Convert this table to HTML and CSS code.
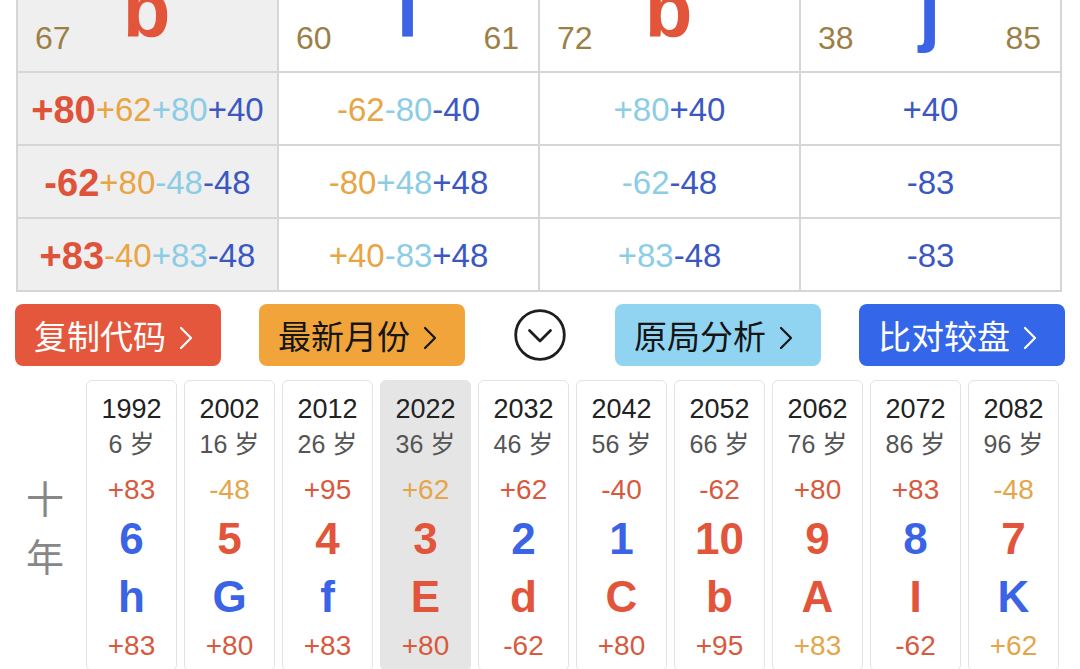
FILE: index.html
```html
<!DOCTYPE html>
<html lang="zh">
<head>
<meta charset="utf-8">
<title>十年</title>
<link rel="stylesheet" href="styles.css">
</head>
<body>
<div class="page">
  <div class="table">
    <div class="cell head shade">
      <span class="hn hl">67</span><span class="big red">b</span><span class="hn hr"></span>
    </div>
    <div class="cell head">
      <span class="hn hl">60</span><span class="big blue">l</span><span class="hn hr">61</span>
    </div>
    <div class="cell head">
      <span class="hn hl">72</span><span class="big red">b</span><span class="hn hr"></span>
    </div>
    <div class="cell head">
      <span class="hn hl">38</span><span class="big blue">j</span><span class="hn hr">85</span>
    </div>

    <div class="cell row shade"><b class="lead">+80</b><span class="o">+62</span><span class="lb">+80</span><span class="db">+40</span></div>
    <div class="cell row"><span class="o">-62</span><span class="lb">-80</span><span class="db">-40</span></div>
    <div class="cell row"><span class="lb">+80</span><span class="db">+40</span></div>
    <div class="cell row"><span class="db">+40</span></div>

    <div class="cell row shade"><b class="lead">-62</b><span class="o">+80</span><span class="lb">-48</span><span class="db">-48</span></div>
    <div class="cell row"><span class="o">-80</span><span class="lb">+48</span><span class="db">+48</span></div>
    <div class="cell row"><span class="lb">-62</span><span class="db">-48</span></div>
    <div class="cell row"><span class="db">-83</span></div>

    <div class="cell row shade"><b class="lead">+83</b><span class="o">-40</span><span class="lb">+83</span><span class="db">-48</span></div>
    <div class="cell row"><span class="o">+40</span><span class="lb">-83</span><span class="db">+48</span></div>
    <div class="cell row"><span class="lb">+83</span><span class="db">-48</span></div>
    <div class="cell row"><span class="db">-83</span></div>
  </div>

  <div class="actions">
    <div class="btn btn-red">复制代码<svg class="chev" viewBox="0 0 16 24" width="16" height="24"><polyline points="3,2 13,12 3,22" fill="none" stroke="currentColor" stroke-width="2.2" stroke-linecap="round" stroke-linejoin="round"/></svg></div>
    <div class="btn btn-orange">最新月份<svg class="chev" viewBox="0 0 16 24" width="16" height="24"><polyline points="3,2 13,12 3,22" fill="none" stroke="currentColor" stroke-width="2.2" stroke-linecap="round" stroke-linejoin="round"/></svg></div>
    <div class="toggle"><svg viewBox="0 0 52 52" width="52" height="52"><circle cx="26" cy="26" r="24.3" fill="none" stroke="#1e1e1e" stroke-width="2.8"/><polyline points="15.5,21.5 26,32 36.5,21.5" fill="none" stroke="#1e1e1e" stroke-width="2.8" stroke-linecap="round" stroke-linejoin="round"/></svg></div>
    <div class="btn btn-sky">原局分析<svg class="chev" viewBox="0 0 16 24" width="16" height="24"><polyline points="3,2 13,12 3,22" fill="none" stroke="currentColor" stroke-width="2.2" stroke-linecap="round" stroke-linejoin="round"/></svg></div>
    <div class="btn btn-blue">比对较盘<svg class="chev" viewBox="0 0 16 24" width="16" height="24"><polyline points="3,2 13,12 3,22" fill="none" stroke="currentColor" stroke-width="2.2" stroke-linecap="round" stroke-linejoin="round"/></svg></div>
  </div>

  <div class="decade">
    <div class="label"><span>十</span><span>年</span></div>
    <div class="cards">
      <div class="card"><div class="yr">1992</div><div class="age">6 岁</div><div class="n r">+83</div><div class="g blue">6</div><div class="g blue">h</div><div class="n r">+83</div></div>
      <div class="card"><div class="yr">2002</div><div class="age">16 岁</div><div class="n o2">-48</div><div class="g red">5</div><div class="g blue">G</div><div class="n r">+80</div></div>
      <div class="card"><div class="yr">2012</div><div class="age">26 岁</div><div class="n r">+95</div><div class="g red">4</div><div class="g blue">f</div><div class="n r">+83</div></div>
      <div class="card current"><div class="yr">2022</div><div class="age">36 岁</div><div class="n o2">+62</div><div class="g red">3</div><div class="g red">E</div><div class="n r">+80</div></div>
      <div class="card"><div class="yr">2032</div><div class="age">46 岁</div><div class="n r">+62</div><div class="g blue">2</div><div class="g red">d</div><div class="n r">-62</div></div>
      <div class="card"><div class="yr">2042</div><div class="age">56 岁</div><div class="n r">-40</div><div class="g blue">1</div><div class="g red">C</div><div class="n r">+80</div></div>
      <div class="card"><div class="yr">2052</div><div class="age">66 岁</div><div class="n r">-62</div><div class="g red">10</div><div class="g red">b</div><div class="n r">+95</div></div>
      <div class="card"><div class="yr">2062</div><div class="age">76 岁</div><div class="n r">+80</div><div class="g red">9</div><div class="g red">A</div><div class="n o2">+83</div></div>
      <div class="card"><div class="yr">2072</div><div class="age">86 岁</div><div class="n r">+83</div><div class="g blue">8</div><div class="g red">I</div><div class="n r">-62</div></div>
      <div class="card"><div class="yr">2082</div><div class="age">96 岁</div><div class="n o2">-48</div><div class="g red">7</div><div class="g blue">K</div><div class="n o2">+62</div></div>
    </div>
  </div>
</div>
</body>
</html>
```

FILE: styles.css
```css
html, body {
  margin: 0;
  padding: 0;
  overflow: hidden;
  background: #ffffff;
}

body {
  font-family: "Liberation Sans", "Noto Sans CJK SC", sans-serif;
  color: #222;
}

.page {
  width: 1080px;
}

/* ---------- top table ---------- */
.table {
  margin: -40px 0 0 16px;
  width: 1046px;
  box-sizing: border-box;
  display: grid;
  grid-template-columns: repeat(4, 1fr);
  grid-template-rows: 109px 71px 71px 71px;
  gap: 2px;
  padding: 2px;
  background: #d6d6d6;
}

.cell {
  background: #ffffff;
}

.cell.shade {
  background: #efefef;
}

.head {
  display: grid;
  grid-template-columns: 1fr auto 1fr;
  align-items: end;
  padding: 0 19px 0 17px;
}

.hn {
  font-size: 32px;
  line-height: 32px;
  color: #9c7f47;
  margin-bottom: 17px;
}

.hl { justify-self: start; }
.hr { justify-self: end; }

.big {
  font-size: 78px;
  line-height: 78px;
  font-weight: 700;
  margin-bottom: 22px;
}

.red { color: #e2553a; }
.blue { color: #3a63e6; }

.row {
  display: flex;
  align-items: center;
  justify-content: center;
  font-size: 33px;
  line-height: 40px;
  white-space: nowrap;
  padding-top: 2px;
}

.lead {
  font-size: 38px;
  font-weight: 700;
  color: #de533a;
}

.o { color: #e9a443; }
.lb { color: #8ccde6; }
.db { color: #3b58c2; }

/* ---------- action buttons ---------- */
.actions {
  display: flex;
  align-items: center;
  gap: 38px;
  margin: 12px 0 0 15px;
}

.btn {
  width: 206px;
  height: 62px;
  box-sizing: border-box;
  border-radius: 8px;
  display: flex;
  align-items: center;
  justify-content: center;
  font-family: "Noto Sans CJK SC", sans-serif;
  font-size: 33px;
  line-height: 40px;
  padding-right: 8px;
}

.chev {
  margin-left: 12px;
  margin-top: 6px;
}

.btn-red { background: #e5573c; color: #ffffff; }
.btn-orange { background: #f0a43a; color: #151515; }
.btn-sky { background: #90d4f1; color: #151515; }
.btn-blue { background: #3466e9; color: #ffffff; }

.toggle {
  width: 52px;
  height: 52px;
  margin: 0 11px;
  display: flex;
}

/* ---------- decade strip ---------- */
.decade {
  display: flex;
  margin-top: 14px;
}

.label {
  width: 86px;
  padding: 88px 0 0 4px;
  box-sizing: border-box;
  display: flex;
  flex-direction: column;
  align-items: center;
  font-family: "Noto Sans CJK SC", sans-serif;
  font-size: 38px;
  line-height: 58px;
  color: #878787;
}

.cards {
  display: flex;
  gap: 7px;
}

.card {
  width: 91px;
  box-sizing: border-box;
  border: 1px solid #e3e3e3;
  border-radius: 6px;
  padding-top: 10px;
  padding-bottom: 4px;
  display: flex;
  flex-direction: column;
  align-items: center;
  text-align: center;
}

.card.current {
  background: #e5e5e5;
  border-color: #e5e5e5;
}

.yr {
  font-size: 27px;
  line-height: 36px;
  color: #222222;
}

.age {
  font-size: 25px;
  line-height: 34px;
  color: #555555;
}

.n {
  font-size: 28px;
  line-height: 40px;
}

.age + .n {
  margin-top: 9px;
}

.n.r { color: #d85a3e; }
.n.o2 { color: #e4a649; }

.g {
  font-size: 44px;
  line-height: 58px;
  font-weight: 700;
}
```
